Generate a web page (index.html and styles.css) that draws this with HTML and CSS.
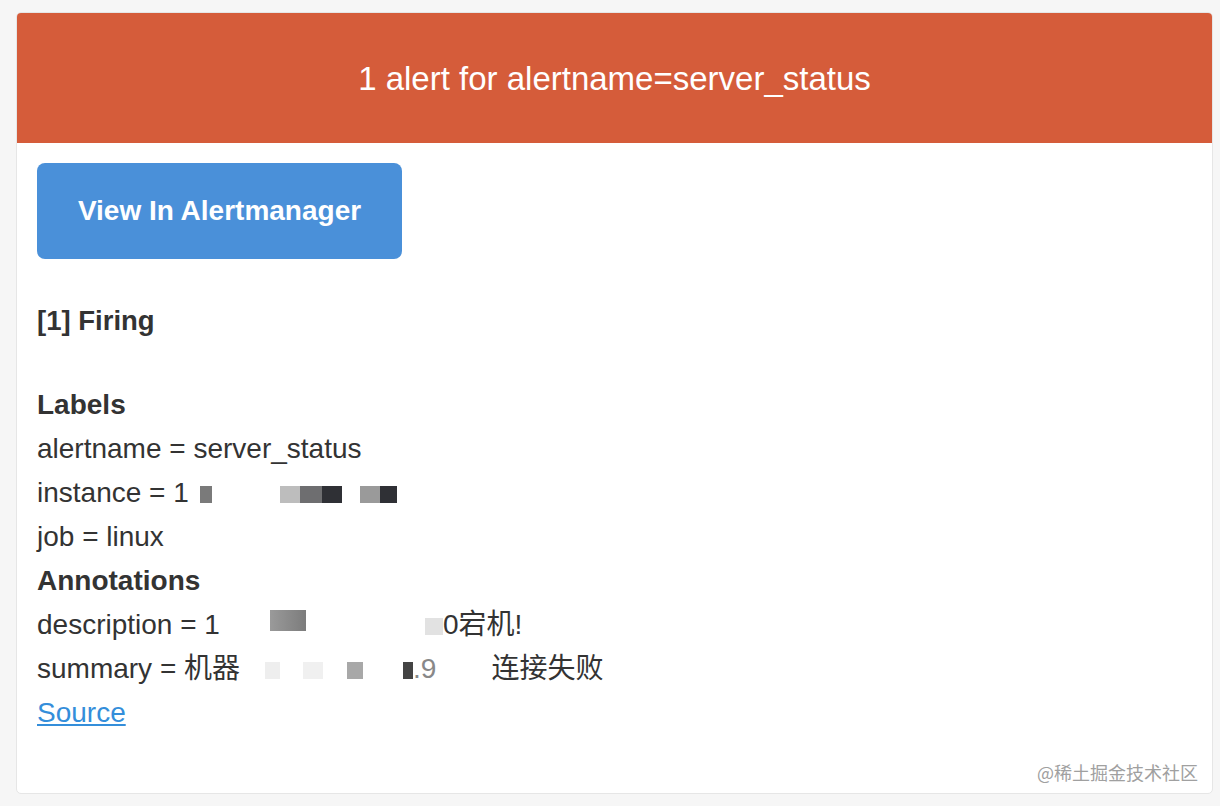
FILE: index.html
```html
<!DOCTYPE html>
<html lang="zh-CN">
<head>
<meta charset="utf-8">
<title>Alert</title>
<link rel="stylesheet" href="styles.css">
</head>
<body>
<div class="card">
  <div class="header">1 alert for alertname=server_status</div>
  <div class="content">
    <a class="btn" href="#">View In Alertmanager</a>
    <div class="firing"><strong>[1] Firing</strong></div>
    <div class="lines">
      <div class="line"><strong>Labels</strong></div>
      <div class="line">alertname = server_status</div>
      <div class="line">instance = 1<span class="m" style="width:11px"></span><span class="m" style="width:12px;background:#7a7a7a"></span><span class="m" style="width:68px"></span><span class="m" style="width:20px;background:#bdbdbd"></span><span class="m" style="width:22px;background:#6e6e70"></span><span class="m" style="width:20px;background:#2f3035"></span><span class="m" style="width:18px"></span><span class="m" style="width:20px;background:#9a9a9a"></span><span class="m" style="width:17px;background:#2f3035"></span></div>
      <div class="line">job = linux</div>
      <div class="line"><strong>Annotations</strong></div>
      <div class="line">description = 1<span class="m" style="width:50px"></span><span class="m tall" style="width:36px;background:linear-gradient(90deg,#9a9a9a,#7c7c7c)"></span><span class="m" style="width:119px"></span><span class="m" style="width:18px;background:#e2e2e2"></span>0宕机!</div>
      <div class="line">summary = 机器<span class="m" style="width:25px"></span><span class="m" style="width:15px;background:#eeeeee"></span><span class="m" style="width:23px"></span><span class="m" style="width:20px;background:#f0f0f0"></span><span class="m" style="width:24px"></span><span class="m" style="width:16px;background:#a8a8a8"></span><span class="m" style="width:40px"></span><span class="m" style="width:10px;background:#444"></span><span class="faint">.9</span><span class="m" style="width:55px"></span>连接失败</div>
      <div class="line"><a class="src" href="#">Source</a></div>
    </div>
  </div>
  <div class="watermark">@稀土掘金技术社区</div>
</div>
</body>
</html>
```
FILE: styles.css
```css
html, body {
  margin: 0;
  padding: 0;
}
body {
  background: #f6f6f6;
  font-family: "Liberation Sans", Helvetica, Arial, "Noto Sans CJK SC", sans-serif;
  color: #333333;
  width: 1220px;
  height: 806px;
  overflow: hidden;
}
.card {
  margin: 12px 0 0 16px;
  width: 1197px;
  height: 782px;
  background: #ffffff;
  border: 1px solid #e6e6e6;
  border-radius: 5px;
  box-sizing: border-box;
  overflow: hidden;
  position: relative;
}
.header {
  background: #d55c3a;
  color: #ffffff;
  height: 130px;
  display: flex;
  align-items: center;
  justify-content: center;
  font-size: 33px;
  padding-top: 2px;
  box-sizing: border-box;
}
.content {
  padding: 20px 20px 0 20px;
}
.btn {
  display: flex;
  align-items: center;
  justify-content: center;
  width: 365px;
  height: 96px;
  background: #4a90d9;
  border-radius: 8px;
  color: #ffffff;
  font-weight: bold;
  font-size: 28px;
  text-decoration: none;
}
.firing {
  margin-top: 40px;
  font-size: 27.5px;
  line-height: 44px;
}
.lines {
  margin-top: 40px;
  font-size: 28px;
  line-height: 44px;
}
.line {
  white-space: nowrap;
}
.m {
  display: inline-block;
  height: 17px;
  vertical-align: -1px;
}
.m.tall {
  height: 21px;
  vertical-align: 3px;
}
.faint {
  color: #888;
}
.src {
  color: #348eda;
  text-decoration: underline;
}
.watermark {
  position: absolute;
  right: 14px;
  bottom: 8px;
  font-size: 18px;
  color: #a0a0a0;
  font-family: "Noto Sans CJK SC", sans-serif;
}
```
